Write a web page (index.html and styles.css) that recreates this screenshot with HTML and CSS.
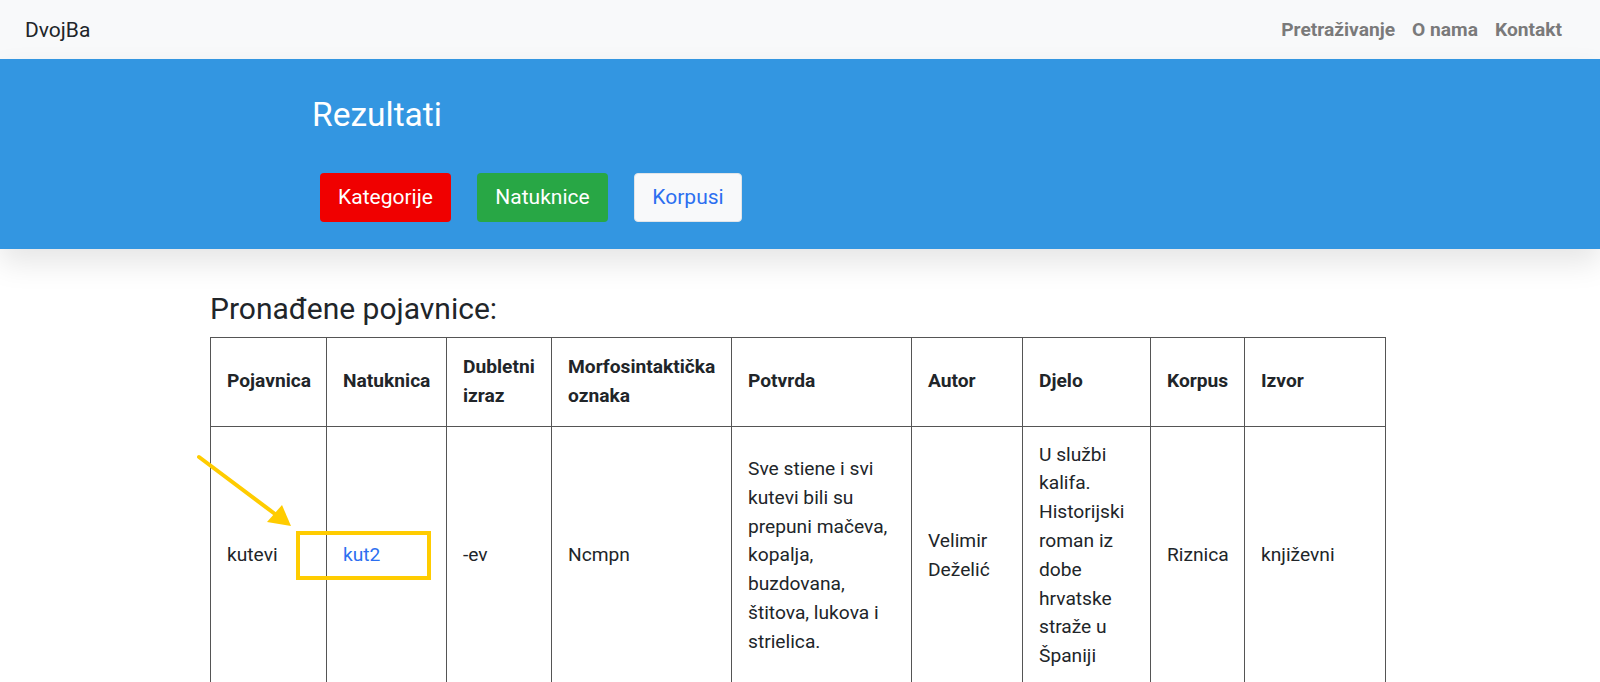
FILE: index.html
```html
<!DOCTYPE html>
<html lang="hr">
<head>
    <meta charset="UTF-8">
    <meta name="viewport" content="width=device-width, initial-scale=1.0">
    <title>DvojBa - Rezultati</title>
    <link rel="stylesheet" href="styles.css">
</head>
<body>
    <nav class="navbar">
        <a href="#" class="brand">DvojBa</a>
        <div class="nav-links">
            <a href="#">Pretraživanje</a>
            <a href="#">O nama</a>
            <a href="#">Kontakt</a>
        </div>
    </nav>

    <header class="banner">
        <h1>Rezultati</h1>
        <div class="banner-buttons">
            <button class="btn btn-red">Kategorije</button>
            <button class="btn btn-green">Natuknice</button>
            <button class="btn btn-light">Korpusi</button>
        </div>
    </header>

    <main class="content">
        <h2>Pronađene pojavnice:</h2>
        <div class="table-wrap">
            <table class="results">
                <colgroup>
                    <col style="width: 116px">
                    <col style="width: 120px">
                    <col style="width: 105px">
                    <col style="width: 180px">
                    <col style="width: 180px">
                    <col style="width: 111px">
                    <col style="width: 128px">
                    <col style="width: 94px">
                    <col style="width: 141px">
                </colgroup>
                <thead>
                    <tr>
                        <th>Pojavnica</th>
                        <th>Natuknica</th>
                        <th>Dubletni izraz</th>
                        <th>Morfosintaktička oznaka</th>
                        <th>Potvrda</th>
                        <th>Autor</th>
                        <th>Djelo</th>
                        <th>Korpus</th>
                        <th>Izvor</th>
                    </tr>
                </thead>
                <tbody>
                    <tr>
                        <td>kutevi</td>
                        <td><a href="#">kut2</a></td>
                        <td>-ev</td>
                        <td>Ncmpn</td>
                        <td>Sve stiene i svi kutevi bili su prepuni mačeva, kopalja, buzdovana, štitova, lukova i strielica.</td>
                        <td>Velimir Deželić</td>
                        <td>U službi kalifa. Historijski roman iz dobe hrvatske straže u Španiji</td>
                        <td>Riznica</td>
                        <td>književni</td>
                    </tr>
                </tbody>
            </table>

            <!-- annotation over the table -->
            <div class="highlight-box"></div>
            <svg class="highlight-arrow" width="100" height="80" viewBox="0 0 100 80">
                <line x1="4" y1="5" x2="80" y2="62" stroke="#ffcc00" stroke-width="4" stroke-linecap="round"/>
                <polygon points="96,74 72,70 87,53" fill="#ffcc00"/>
            </svg>
        </div>
    </main>
</body>
</html>
```

FILE: styles.css
```css
body {
    margin: 0;
    padding: 0;
    font-family: Roboto, "Liberation Sans", Arial, sans-serif;
    color: #212529;
    background-color: #fff;
}
.navbar {
    height: 59px;
    background-color: #f8f9fa;
    display: flex;
    align-items: center;
    justify-content: space-between;
    padding: 0 38px 0 25px;
}
.brand {
    font-size: 21px;
    color: #212529;
    text-decoration: none;
}
.nav-links {
    display: flex;
    gap: 17px;
}
.nav-links a {
    font-size: 19.2px;
    font-weight: bold;
    color: #7a7a7a;
    text-decoration: none;
}
.banner {
    background-color: #3396e1;
    height: 190px;
    box-sizing: border-box;
    padding: 34px 0 0 312px;
    box-shadow: 0 14px 28px rgba(0, 0, 0, 0.1);
    position: relative;
}
.banner h1 {
    margin: 0;
    font-size: 33.5px;
    font-weight: normal;
    color: #fff;
    line-height: 44px;
}
.banner-buttons {
    display: flex;
    gap: 26px;
    margin: 36px 0 0 8px;
}
.btn {
    font-family: Roboto, "Liberation Sans", Arial, sans-serif;
    font-size: 21px;
    line-height: 31px;
    padding: 8px 17px;
    border: 1px solid transparent;
    border-radius: 4px;
    cursor: pointer;
}
.btn-red {
    background-color: #f00000;
    color: #fff;
    width: 131px;
}
.btn-green {
    background-color: #28a745;
    color: #fff;
    width: 131px;
}
.btn-light {
    background-color: #f8f9fa;
    color: #2c6ff0;
    border-color: #e0e4e8;
    width: 108px;
}
.content {
    padding: 40px 0 0 210px;
}
.content h2 {
    margin: 0 0 8px 0;
    font-size: 30px;
    font-weight: normal;
    line-height: 40px;
    color: #212529;
}
.table-wrap {
    position: relative;
    width: 1175px;
}
.results {
    border-collapse: collapse;
    table-layout: fixed;
    width: 1175px;
    font-size: 19.2px;
    line-height: 28.8px;
}
.results th,
.results td {
    border: 1px solid #555;
    padding: 15px 15px 15px 16px;
    text-align: left;
    vertical-align: middle;
}
.results th {
    font-weight: bold;
}
.results td {
    padding-top: 14px;
    padding-bottom: 14px;
}
.results td a {
    color: #2c6ff0;
    text-decoration: none;
}
.highlight-box {
    position: absolute;
    left: 86px;
    top: 194px;
    width: 127px;
    height: 41px;
    border: 4px solid #ffcc00;
}
.highlight-arrow {
    position: absolute;
    left: -15px;
    top: 115px;
}
```
